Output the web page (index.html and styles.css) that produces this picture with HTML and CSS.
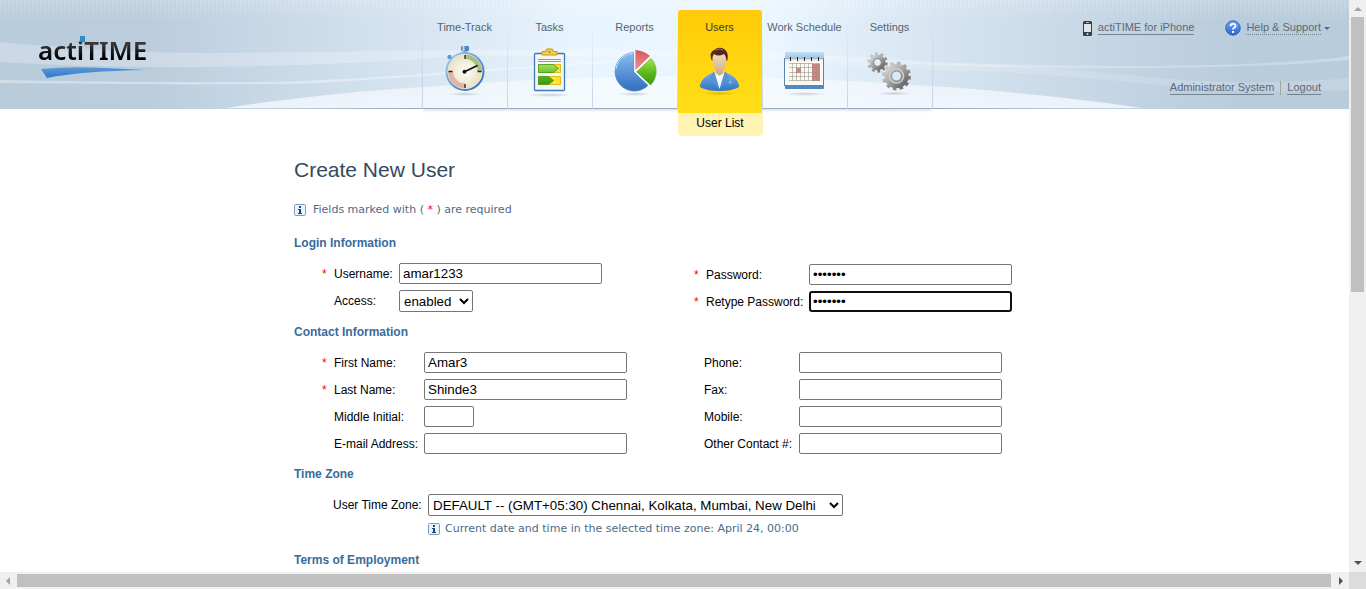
FILE: index.html
```html
<!DOCTYPE html>
<html lang="en">
<head>
<meta charset="utf-8">
<title>actiTIME - Create New User</title>
<link rel="stylesheet" href="styles.css">
</head>
<body>
<div class="viewport">
  <div class="page">
    <header class="header">
      <svg class="waves" viewBox="0 0 1349 108" preserveAspectRatio="none" aria-hidden="true">
        <defs>
          <linearGradient id="hill" x1="0" y1="0" x2="0" y2="1"><stop offset="0" stop-color="#fff" stop-opacity=".45"/><stop offset="1" stop-color="#f8faff" stop-opacity=".8"/></linearGradient>
        </defs>
        <path d="M0 42C90 50 150 53 215 53C330 52 520 48 677 50C800 53 880 58 932 62C1040 66 1250 70 1349 56V60C1250 70 1040 70 932 65C800 58 500 52 420 59C300 67 150 71 0 62Z" fill="#fff" fill-opacity=".25"/>
        <path d="M0 80C120 82 250 83 300 81C430 76 540 62 677 59C540 66 430 77 300 84C200 85 80 84 0 83Z" fill="#fff" fill-opacity=".35"/>
        <path d="M932 63C1020 64 1100 72 1180 80C1240 84 1300 82 1349 78V90C1300 93 1240 92 1180 87C1100 79 1020 71 932 70C850 66 760 61 677 59C770 58 860 60 932 63Z" fill="#fff" fill-opacity=".15"/>
        <path d="M226 108C290 98 360 91 422 87C510 80 590 77 677 76C800 77 870 82 932 86C1010 91 1080 99 1142 108Z" fill="url(#hill)"/>
      </svg>
      <div class="logo">
        <span class="logo-name">actiTIME</span>
        <span class="logo-dot"></span>
        <svg class="logo-swoosh" width="106" height="12" viewBox="0 0 106 12" aria-hidden="true">
          <defs><linearGradient id="swoosh" x1="0" y1="0" x2="0" y2="1"><stop offset="0" stop-color="#6098d4"/><stop offset="1" stop-color="#2c78d0"/></linearGradient></defs>
          <path d="M0 2Q30-1 65 1L106 3Q40 4 6 11Z" fill="url(#swoosh)"/>
        </svg>
      </div>
      <nav>
        <ul class="nav">
          <li class="nav-item"><a class="nav-link" href="#">Time-Track
            <svg class="nav-icon" viewBox="0 0 48 52" aria-hidden="true">
              <defs>
                <linearGradient id="rim" x1="0" y1="0" x2="1" y2="1"><stop offset="0" stop-color="#a9cff5"/><stop offset="1" stop-color="#2f65ac"/></linearGradient>
                <radialGradient id="face"><stop offset="0" stop-color="#fffef6"/><stop offset="1" stop-color="#e6e1c5"/></radialGradient>
                <radialGradient id="shade"><stop offset="0" stop-color="#8292a2" stop-opacity=".4"/><stop offset="1" stop-color="#8292a2" stop-opacity="0"/></radialGradient>
              </defs>
              <ellipse cx="24" cy="49" rx="17" ry="2" fill="url(#shade)"/>
              <rect x="20" y="1" width="8" height="5" rx="1" fill="#4f86c8"/><path d="M22.500 1v5" stroke="#b7d5f3" stroke-width="2"/><path d="M21.500 6h5v3h-5z" fill="#7aa9df"/>
              <circle cx="8.500" cy="12" r="2.200" fill="#6496d2"/><path d="M9 12l3 3" stroke="#6496d2" stroke-width="2"/>
              <circle cx="24" cy="26.500" r="19.500" fill="url(#rim)"/><circle cx="24" cy="26.500" r="17.500" fill="#eef2f4"/>
              <circle cx="24" cy="26.500" r="17" fill="url(#face)"/>
              <path d="M24 9.500a17 17 0 0 1 17 17h-4.500A12.500 12.500 0 0 0 24 14z" fill="#a5c282"/>
              <path d="M24 43.500A17 17 0 0 1 7 26.500H12A12 12 0 0 0 24 38.500z" fill="#e0b5a6"/>
              <path d="M24 10v4M24 39v4M7.500 26.500h4M36.500 26.500h4" stroke="#222" stroke-width="1.300"/>
              <path d="M23 27L36.500 20.500" stroke="#111" stroke-width="1.700"/><circle cx="23.500" cy="26.700" r="2" fill="#111"/>
            </svg></a></li>
          <li class="nav-item"><a class="nav-link" href="#">Tasks
            <svg class="nav-icon" viewBox="0 0 48 52" aria-hidden="true">
              <defs><linearGradient id="green" x1="0" y1="0" x2="0" y2="1"><stop offset="0" stop-color="#a5e352"/><stop offset=".55" stop-color="#58b81b"/><stop offset="1" stop-color="#3b990f"/></linearGradient></defs>
              <ellipse cx="24" cy="50" rx="22" ry="2" fill="url(#shade)"/>
              <rect x="8.500" y="8.500" width="30" height="37" rx="1" fill="#f4f6f5" stroke="#4379b5" stroke-width="1.300"/>
              <path d="M16 6.500h4V5q0-1 1-1h5q1 0 1 1v1.500h4V10H16z" fill="#f5cf45" stroke="#c69a16"/><rect x="22.500" y="6" width="2" height="2" fill="#b98d13"/>
              <path d="M12 14.500h23M12 16.500h23" stroke="#999"/>
              <path d="M12.500 19.500h22v8h-22zM12.500 31.500h22v8h-22z" fill="#ffe233" stroke="#dfbd17"/>
              <path d="M12.500 19.500h15l5 4-5 4h-15zM12.500 31.500h10l5 4-5 4h-10z" fill="url(#green)" stroke="#48942a" stroke-width=".8"/>
            </svg></a></li>
          <li class="nav-item"><a class="nav-link" href="#">Reports
            <svg class="nav-icon" viewBox="0 0 48 52" aria-hidden="true">
              <defs>
                <linearGradient id="blue" x1="0" y1="0" x2="0" y2="1"><stop offset="0" stop-color="#89bdf0"/><stop offset="1" stop-color="#2f6ebe"/></linearGradient>
                <linearGradient id="red" x1="0" y1="0" x2="0" y2="1"><stop offset="0" stop-color="#d8575e"/><stop offset="1" stop-color="#eb9492"/></linearGradient>
              </defs>
              <ellipse cx="24" cy="49" rx="17" ry="2" fill="url(#shade)"/>
              <path d="M23 7.500A19.300 19.300 0 1 0 37.500 40L23 27Z" fill="url(#blue)" stroke="#4e84c5" stroke-width=".8"/>
              <path d="M5 24A18.500 18.500 0 0 1 22.500 8" fill="none" stroke="#c7e1fa"/>
              <path d="M24.500 24.500V5.500Q32 5.500 38.500 11Z" fill="url(#red)" stroke="#c5555c" stroke-width=".7"/>
              <path d="M25.500 27L40 13.500A19 19 0 0 1 39.500 40Z" fill="url(#green)" stroke="#68a52c" stroke-width=".7"/>
              <path d="M23.800 6v20.500L39 41M24.500 26L39.500 12" fill="none" stroke="#fff" stroke-width="1.200"/>
            </svg></a></li>
          <li class="nav-item nav-item-active"><a class="nav-link" href="#">Users
            <svg class="nav-icon" viewBox="0 0 48 52" aria-hidden="true">
              <defs>
                <linearGradient id="suit" x1="0" y1="0" x2="0" y2="1"><stop offset="0" stop-color="#74b0ed"/><stop offset="1" stop-color="#2f73c2"/></linearGradient>
                <linearGradient id="skin" x1="0" y1="0" x2="0" y2="1"><stop offset="0" stop-color="#f7dfc3"/><stop offset="1" stop-color="#d8b48d"/></linearGradient>
                <radialGradient id="gold"><stop offset="0" stop-color="#9c7d00" stop-opacity=".35"/><stop offset="1" stop-color="#9c7d00" stop-opacity="0"/></radialGradient>
              </defs>
              <ellipse cx="23" cy="48.500" rx="18" ry="2" fill="url(#gold)"/>
              <path d="M4 40Q6 32 17 27.500h13Q41 32 43 40Q44 42 40 43.500Q33 46 23.500 46Q13 46 7 43.500Q3 42 4 40Z" fill="url(#suit)"/>
              <path d="M18 26l5.500 18L29 26z" fill="#f4f7fc"/><path d="M18 26l-4 6 9.500 13zM29 26l4 6-9.500 13z" fill="#5592d6"/>
              <path d="M19.500 21h8v7l-4 3-4-3z" fill="#d5ad82"/>
              <path d="M16.500 11Q17 6 23.500 6T30.500 11Q31 19 28.500 23Q23.500 29 18.500 23Q16 19 16.500 11Z" fill="url(#skin)"/>
              <path d="M15.500 15Q13 7 18 5Q23 1 28 4Q33 7 31.500 15L30.500 16Q30 11 28 9Q22 12 18 9Q16 11 16.500 16Z" fill="#53291f"/>
              <path d="M19 5q5-2 8 0" stroke="#99706a" fill="none"/><path d="M32 38l3-4 1 5z" fill="#7ab2ea"/>
            </svg></a>
            <a class="subnav" href="#">User List</a></li>
          <li class="nav-item"><a class="nav-link" href="#">Work Schedule
            <svg class="nav-icon" viewBox="0 0 48 52" aria-hidden="true">
              <defs><linearGradient id="cover" x1="0" y1="0" x2="0" y2="1"><stop offset="0" stop-color="#c4def4"/><stop offset="1" stop-color="#91bce4"/></linearGradient></defs>
              <ellipse cx="24" cy="49" rx="22" ry="2" fill="url(#shade)"/>
              <rect x="4" y="7" width="39" height="9" rx="1" fill="url(#cover)"/><path d="M4 39h39v4q0 1-1 1H5q-1 0-1-1z" fill="#5288c0"/>
              <rect x="3.500" y="13.500" width="39" height="27" fill="#faf9f3" stroke="#5685b8"/>
              <path d="M4 14.500h38" stroke="#e8e4d5" stroke-width="2"/>
              <path d="M31 19h8v17h-8z" fill="#d4817f"/><path d="M15 23h5v5h-5z" fill="#d4817f"/>
              <path d="M8 18.500h31M8 22.500h31M8 27.500h31M8 31.500h31M8 35.500h31M11.500 18v18M15.500 18v18M19.500 18v18M23.500 18v18M27.500 18v18M31.500 18v18M35.500 18v18" stroke="#948f89" stroke-opacity=".55"/>
              <path d="M9.500 12v4M16.500 12v4M23.500 12v4M30.500 12v4M37.500 12v4" stroke="#222"/>
            </svg></a></li>
          <li class="nav-item"><a class="nav-link" href="#">Settings
            <svg class="nav-icon" viewBox="0 0 48 52" aria-hidden="true">
              <defs><linearGradient id="steel" x1="0" y1="0" x2="1" y2="1"><stop offset="0" stop-color="#d4d4d4"/><stop offset=".5" stop-color="#a0a0a0"/><stop offset="1" stop-color="#666"/></linearGradient></defs>
              <ellipse cx="28" cy="48.500" rx="18" ry="2" fill="url(#shade)"/>
              <g fill="none" stroke="url(#steel)">
                <circle cx="11.500" cy="17.500" r="8.700" stroke-width="3" stroke-dasharray="2.700 2.770"/><circle cx="11.500" cy="17.500" r="5.700" stroke-width="4.500"/>
                <circle cx="30.500" cy="31" r="12.700" stroke-width="3.500" stroke-dasharray="3.500 3.150"/><circle cx="30.500" cy="31" r="8.700" stroke-width="7"/>
              </g>
              <circle cx="11.500" cy="17.500" r="4" fill="none" stroke="#8a8a8a"/><circle cx="30.500" cy="31" r="7" fill="none" stroke="#ccc" stroke-width="1.500"/><circle cx="30.500" cy="31" r="5" fill="none" stroke="#888"/>
            </svg></a></li>
        </ul>
      </nav>
      <div class="account">
        <div class="account-row account-help">
          <svg width="10" height="15" viewBox="0 0 10 15" aria-hidden="true"><rect width="9" height="15" rx="1.500" fill="#3d3d3d"/><path d="M1 3h7v8H1z" fill="#e2e5e8"/><path d="M3 1.500h3" stroke="#bbb"/><circle cx="4.500" cy="13" r="1" fill="#ddd"/></svg>
          <a class="account-link account-phone" href="#">actiTIME for iPhone</a>
          <svg width="16" height="16" viewBox="0 0 16 16" aria-hidden="true">
            <defs><linearGradient id="help" x1="0" y1="0" x2="0" y2="1"><stop offset="0" stop-color="#75a9f3"/><stop offset="1" stop-color="#2b62d5"/></linearGradient></defs>
            <circle cx="8" cy="8" r="7.200" fill="url(#help)" stroke="#3261b8"/><path d="M5.500 6.300Q5.500 3.800 8 3.800T10.500 6Q10.500 7.200 9.200 7.800Q8 8.400 8 9.600" fill="none" stroke="#fff" stroke-width="1.800"/><path d="M7 11h2v2H7z" fill="#fff"/>
          </svg>
          <a class="account-link account-link-dotted" href="#">Help &amp; Support</a>
          <span class="caret"></span>
        </div>
        <div class="account-row account-user">
          <a class="account-link" href="#">Administrator System</a>
          <span class="account-divider"></span>
          <a class="account-link" href="#">Logout</a>
        </div>
      </div>
    </header>

    <main class="content">
      <h1 class="title">Create New User</h1>
      <p class="note note-required">
        <svg class="info" viewBox="0 0 12 12" aria-hidden="true"><rect x=".5" y=".5" width="11" height="11" rx="1" fill="#e9f4fd" stroke="#7c9dbd"/><path d="M5 2h2v2H5zM4 5h3v4h1v1H4V9h1V6H4z" fill="#1d4674"/></svg>
        <span>Fields marked with ( <span class="star">*</span> ) are required</span>
      </p>
      <form>
        <h2 class="section-title">Login Information</h2>
        <div class="columns">
          <div class="fields fields-login">
            <span class="mark">*</span><label for="username">Username:</label><input class="text-box" id="username" type="text" value="amar1233">
            <label class="unmarked" for="access">Access:</label><select class="select select-access" id="access"><option>enabled</option><option>disabled</option></select>
          </div>
          <div class="fields fields-password">
            <span class="mark">*</span><label for="password">Password:</label><input class="text-box" id="password" type="password" value="pass123">
            <span class="mark">*</span><label for="retype">Retype Password:</label><input class="text-box text-box-current" id="retype" type="password" value="pass123">
          </div>
        </div>
        <h2 class="section-title">Contact Information</h2>
        <div class="columns">
          <div class="fields fields-name">
            <span class="mark">*</span><label for="first">First Name:</label><input class="text-box" id="first" type="text" value="Amar3">
            <span class="mark">*</span><label for="last">Last Name:</label><input class="text-box" id="last" type="text" value="Shinde3">
            <label class="unmarked" for="middle">Middle Initial:</label><input class="text-box text-box-short" id="middle" type="text">
            <label class="unmarked" for="email">E-mail Address:</label><input class="text-box" id="email" type="text">
          </div>
          <div class="fields fields-phone">
            <label class="unmarked" for="phone">Phone:</label><input class="text-box" id="phone" type="text">
            <label class="unmarked" for="fax">Fax:</label><input class="text-box" id="fax" type="text">
            <label class="unmarked" for="mobile">Mobile:</label><input class="text-box" id="mobile" type="text">
            <label class="unmarked" for="other">Other Contact #:</label><input class="text-box" id="other" type="text">
          </div>
        </div>
        <h2 class="section-title">Time Zone</h2>
        <div class="zone">
          <label for="zone">User Time Zone:</label>
          <select class="select select-zone" id="zone"><option>DEFAULT -- (GMT+05:30) Chennai, Kolkata, Mumbai, New Delhi</option></select>
          <p class="note note-zone">
            <svg class="info" viewBox="0 0 12 12" aria-hidden="true"><rect x=".5" y=".5" width="11" height="11" rx="1" fill="#e9f4fd" stroke="#7c9dbd"/><path d="M5 2h2v2H5zM4 5h3v4h1v1H4V9h1V6H4z" fill="#1d4674"/></svg>
            <span>Current date and time in the selected time zone: April 24, 00:00</span>
          </p>
        </div>
        <h2 class="section-title">Terms of Employment</h2>
      </form>
    </main>
  </div>
  <div class="scroll scroll-vertical">
    <span class="arrow arrow-up"></span><span class="thumb thumb-vertical"></span><span class="arrow arrow-down"></span>
  </div>
  <div class="scroll scroll-horizontal">
    <span class="arrow arrow-left"></span><span class="thumb thumb-horizontal"></span><span class="arrow arrow-right"></span>
  </div>
  <div class="scroll-corner"></div>
</div>
</body>
</html>
```

FILE: styles.css
```css
* {
  box-sizing: border-box;
}

body {
  margin: 0;
  background: #fff;
  color: #000;
  font: 12px/16px "Liberation Sans", Arial, sans-serif;
}

.viewport {
  display: grid;
  grid-template-columns: minmax(0, 1fr) 17px;
  grid-template-rows: minmax(0, 1fr) 17px;
  height: 100vh;
}

.page {
  overflow: hidden;
}

/* Header */

.header {
  position: relative;
  display: grid;
  grid-template-columns: 1fr auto 1fr;
  height: 109px;
  padding-left: 5px;
  background: linear-gradient(90deg, #b9ccdc 0, #bbcddd 11%, #c3d4e4 17%, #d5e4f0 30%, #e9f5fe 43%, #ebf6ff 57%, #d5e4f0 70%, #c3d4e4 83%, #b9ccdc 92%);
}

.header::before {
  content: "";
  position: absolute;
  inset: 0 0 auto;
  height: 22px;
  background: repeating-linear-gradient(90deg, rgba(255, 255, 255, .24) 0 2px, rgba(255, 255, 255, .12) 2px 4px);
  mask-image: linear-gradient(#000, transparent);
}

.header::after {
  content: "";
  position: absolute;
  inset: auto 0 0;
  height: 1px;
  background: linear-gradient(90deg, transparent 18%, #96abc1 30%, #96abc1 70%, transparent 84%);
}

.waves {
  position: absolute;
  inset: 0 0 auto;
  width: 100%;
  height: 108px;
}

.logo {
  position: relative;
  justify-self: start;
  margin: 34px 0 0 33px;
}

.logo-name {
  display: block;
  background: linear-gradient(#383838 30%, #000 75%);
  background-clip: text;
  color: transparent;
  font: 600 26px/32px "Noto Sans", sans-serif;
}

.logo-dot {
  position: absolute;
  top: 2px;
  left: 42px;
  width: 5px;
  height: 6px;
  background: #2d8bcb;
}

.logo-swoosh {
  position: absolute;
  top: 33px;
  left: 3px;
}

.nav {
  position: relative;
  z-index: 1;
  display: flex;
  margin: 0;
  padding: 0;
  border-right: 1px solid;
  border-image: linear-gradient(transparent 20%, #c3d2e8) 1;
  list-style: none;
  box-shadow: 0 3px 3px -2px rgba(120, 120, 120, .3);
}

.nav-item {
  position: relative;
  width: 85px;
  border-left: 1px solid;
  border-image: linear-gradient(transparent 20%, #c3d2e8) 1;
}

.nav-link {
  position: relative;
  display: flex;
  flex-direction: column;
  align-items: center;
  height: 109px;
  padding-top: 19px;
  color: #566470;
  font-size: 11px;
  text-decoration: none;
  white-space: nowrap;
}

.nav-icon {
  width: 48px;
  height: 52px;
  margin-top: 10px;
}

.nav-item-active::before {
  content: "";
  position: absolute;
  inset: 10px 0 -4px;
  border-radius: 3px 3px 0 0;
  background: linear-gradient(#ffcb08, #ffdf18);
}

.nav-item-active .nav-link {
  color: #3c3a28;
}

.subnav {
  position: absolute;
  top: 113px;
  left: 0;
  width: 85px;
  padding: 2px 0 5px;
  border-radius: 0 0 4px 4px;
  background: #fff3b4;
  color: #000;
  text-align: center;
  text-decoration: none;
}

.account {
  position: relative;
  display: flex;
  flex-direction: column;
  justify-content: space-between;
  padding: 20px 19px 14px 0;
  font-size: 11px;
}

.account-row {
  display: flex;
  align-items: center;
  justify-content: flex-end;
}

.account-help {
  gap: 5px;
}

.account-user {
  gap: 6px;
  margin-right: 9px;
}

.account-phone {
  margin-right: 26px;
}

.account-link {
  border-bottom: 1px solid #75828f;
  color: #5b6975;
  line-height: 13px;
  text-decoration: none;
  white-space: nowrap;
}

.account-link-dotted {
  border-bottom-style: dotted;
}

.account-divider {
  width: 1px;
  height: 14px;
  background: #a5a5a3;
}

.caret {
  margin-left: -2px;
  border: 3px solid transparent;
  border-top-color: #5b6975;
  border-bottom: 0;
}

/* Form */

.content {
  max-width: 771px;
  margin: 0 auto;
  padding: 49px 0 0 5px;
}

.title {
  margin: 0 0 20px;
  color: #34495e;
  font-size: 21px;
  font-weight: 400;
  line-height: 24px;
}

.note {
  display: flex;
  align-items: center;
  gap: 5px;
  margin: 0;
  color: #4f6a85;
  font: 11px/16px "DejaVu Sans", Verdana, sans-serif;
}

.note-required {
  gap: 7px;
}

.info {
  width: 12px;
  height: 12px;
}

.star,
.mark {
  color: #f00;
}

.section-title {
  margin: 12px 0;
  color: #386c9c;
  font-size: 12px;
  line-height: 16px;
}

.note-required + form .section-title:first-child {
  margin-top: 17px;
}

.columns {
  display: grid;
  grid-template-columns: 372px 1fr;
  padding-left: 28px;
}

.fields {
  display: grid;
  align-content: start;
  align-items: center;
  justify-items: start;
  row-gap: 6px;
}

.fields-login {
  grid-template-columns: 12px 65px 1fr;
}

.fields-password {
  grid-template-columns: 12px 103px 1fr;
  padding-top: 1px;
}

.fields-name {
  grid-template-columns: 12px 90px 1fr;
}

.fields-phone {
  grid-template-columns: 10px 95px 1fr;
}

.fields label {
  white-space: nowrap;
}

.unmarked {
  grid-column: 2;
}

.text-box {
  width: 203px;
  height: 21px;
  padding: 1px 3px;
  border: 1px solid #767676;
  border-radius: 2px;
  background: #fff;
  font-family: "Liberation Sans", Arial, sans-serif;
}

.text-box-short {
  width: 50px;
}

.text-box-current {
  padding: 0 2px;
  border: 2px solid #101010;
  border-radius: 3px;
  outline: 0;
}

.select {
  height: 22px;
  border: 1px solid #767676;
  border-radius: 2px;
  background: #fff;
  color: #000;
  font-family: "Liberation Sans", Arial, sans-serif;
}

.select-access {
  width: 74px;
}

.select-zone {
  width: 415px;
}

.zone {
  display: grid;
  grid-template-columns: 95px 1fr;
  align-items: center;
  justify-items: start;
  row-gap: 5px;
  margin-bottom: 15px;
  padding-left: 39px;
}

.note-zone {
  grid-column: 2;
}

/* Scroll bars */

.scroll {
  display: flex;
  align-items: center;
  background: #f0f0f0;
}

.scroll-vertical {
  flex-direction: column;
}

.thumb {
  background: #c0c0c0;
}

.thumb-vertical {
  flex: 0 0 48%;
  width: 13px;
  margin: 6px 0 auto;
}

.thumb-horizontal {
  flex: 1;
  height: 13px;
  margin: 0 8px 0 7px;
}

.arrow {
  border: 4px solid transparent;
}

.arrow-up {
  margin-top: 7px;
  border-top: 0;
  border-bottom-color: #a3a3a3;
}

.arrow-down {
  margin-bottom: 7px;
  border-bottom: 0;
  border-top-color: #505050;
}

.arrow-left {
  margin-left: 6px;
  border-left: 0;
  border-right-color: #a3a3a3;
}

.arrow-right {
  margin-right: 6px;
  border-right: 0;
  border-left-color: #505050;
}

.scroll-corner {
  background: #dcdcdc;
}
```
